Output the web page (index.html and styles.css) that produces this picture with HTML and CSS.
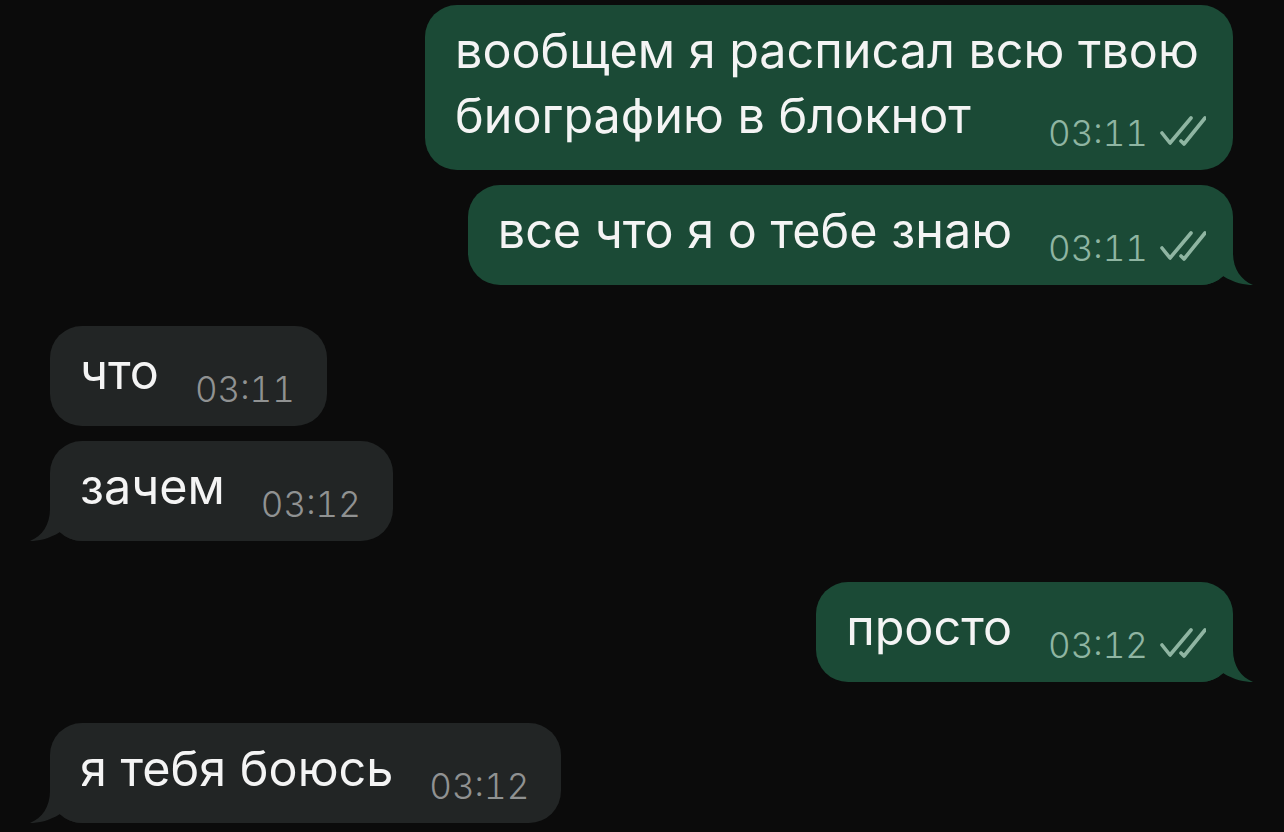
FILE: index.html
```html
<!DOCTYPE html>
<html lang="ru">
<head>
    <meta charset="UTF-8">
    <meta name="viewport" content="width=device-width, initial-scale=1.0">
    <title>Чат</title>
    <link rel="stylesheet" href="styles.css">
</head>
<body>

    <div class="chat">

        <div class="bubble out">
            вообщем я расписал всю твою биографию в блокнот
            <span class="meta">03:11
                <svg class="checks" viewBox="0 0 46 30"><path d="M2 17 L10 27 L31 2 M21 25 L24 28 L45 2"/></svg>
            </span>
        </div>
        <div class="bubble out">
            все что я о тебе знаю
            <span class="meta">03:11
                <svg class="checks" viewBox="0 0 46 30"><path d="M2 17 L10 27 L31 2 M21 25 L24 28 L45 2"/></svg>
            </span>
            <svg class="tail" viewBox="0 0 52 40"><path d="M0 0 H32 V8 C32 24 40 35 52 40 C44 40 33 38 22 31 C15 37 8 40 0 40 Z"/></svg>
        </div>

        <div class="bubble in group-start">
            что
            <span class="meta">03:11</span>
        </div>
        <div class="bubble in">
            зачем
            <span class="meta">03:12</span>
            <svg class="tail" viewBox="0 0 52 40"><path d="M0 0 H32 V8 C32 24 40 35 52 40 C44 40 33 38 22 31 C15 37 8 40 0 40 Z"/></svg>
        </div>

        <div class="bubble out group-start">
            просто
            <span class="meta">03:12
                <svg class="checks" viewBox="0 0 46 30"><path d="M2 17 L10 27 L31 2 M21 25 L24 28 L45 2"/></svg>
            </span>
            <svg class="tail" viewBox="0 0 52 40"><path d="M0 0 H32 V8 C32 24 40 35 52 40 C44 40 33 38 22 31 C15 37 8 40 0 40 Z"/></svg>
        </div>

        <div class="bubble in group-start">
            я тебя боюсь
            <span class="meta">03:12</span>
            <svg class="tail" viewBox="0 0 52 40"><path d="M0 0 H32 V8 C32 24 40 35 52 40 C44 40 33 38 22 31 C15 37 8 40 0 40 Z"/></svg>
        </div>

    </div>

</body>
</html>
```

FILE: styles.css
```css
/* Общие стили */
* {
    margin: 0;
    padding: 0;
    box-sizing: border-box;
}

body {
    background: #0b0b0b;
    color: #f4f4f4;
    font-family: 'Inter', 'Noto Sans', sans-serif;
    overflow: hidden;
}

/* Лента сообщений */
.chat {
    display: flex;
    flex-direction: column;
    gap: 15px;
    padding: 5px 51px 0 50px;
}

.group-start {
    margin-top: 26px;
}

/* Пузырь */
.bubble {
    position: relative;
    max-width: 808px;
    padding: 13px 27px 22px 30px;
    border-radius: 32px;
    font-size: 48.5px;
    line-height: 65px;
}

.out {
    align-self: flex-end;
    background: #1b4a36;
}

.in {
    align-self: flex-start;
    background: #222525;
    padding-right: 32px;
}

/* Время и галочки */
.meta {
    float: right;
    display: flex;
    align-items: center;
    gap: 12px;
    margin: 35px 0 0 36px;
    font-size: 35px;
    font-weight: 300;
    line-height: 30px;
    font-variant-numeric: tabular-nums;
    color: #909292;
}

.out .meta {
    color: #8fb5a2;
}

.checks {
    width: 46px;
    height: 30px;
    margin-top: -4px;
    fill: none;
    stroke: #8fb5a2;
    stroke-width: 3.6;
    stroke-linecap: round;
    stroke-linejoin: round;
}

/* Хвостик у последнего сообщения в группе */
.tail {
    position: absolute;
    bottom: 0;
    width: 52px;
    height: 40px;
}

.out .tail {
    right: -20px;
    fill: #1b4a36;
}

.in .tail {
    left: -20px;
    fill: #222525;
    transform: scaleX(-1);
}
```
